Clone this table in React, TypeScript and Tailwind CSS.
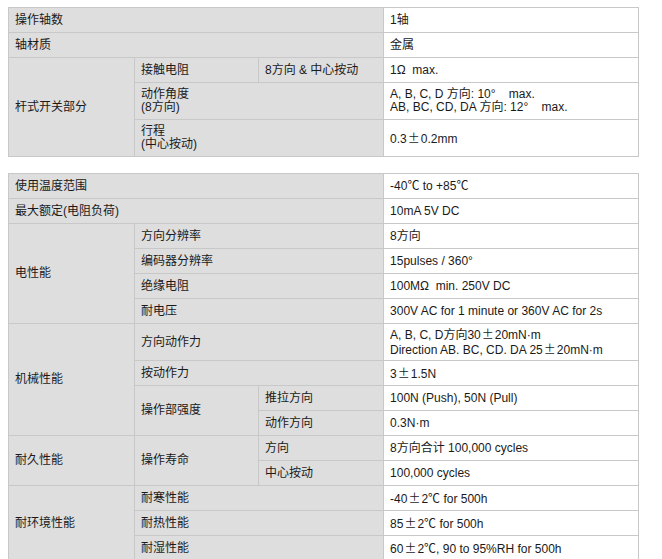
import React from 'react'

const font = { fontFamily: '"Liberation Sans", "Noto Sans CJK SC", sans-serif' }

// label cell (gray) and value cell (white)
const L = 'bg-[#dedede] border border-[#c8c8c8] px-[6px] py-0 h-[25px] align-middle text-left font-normal'
const V = 'bg-white border border-[#c8c8c8] px-[6px] py-0 h-[25px] align-middle text-left'
const TALL = ' !h-[37px] leading-[13px]'

function Pm() {
  return <span className="px-[1px]" style={{ fontFamily: '"Noto Sans CJK SC", sans-serif' }}>±</span>
}

function Cols() {
  return (
    <colgroup>
      <col className="w-[126px]" />
      <col className="w-[124px]" />
      <col className="w-[125px]" />
      <col className="w-[255px]" />
    </colgroup>
  )
}

export default function App() {
  return (
    <div className="min-h-screen bg-white pt-[7px] pl-[8px] text-[12px] leading-[13px] text-[#1a1a1a]" style={font}>
      {/* lever switch section */}
      <table className="table-fixed w-[630px] border-collapse">
        <Cols />
        <tbody>
          <tr>
            <td className={L} colSpan={3}>操作轴数</td>
            <td className={V}>1轴</td>
          </tr>
          <tr>
            <td className={L} colSpan={3}>轴材质</td>
            <td className={V}>金属</td>
          </tr>
          <tr>
            <td className={L} rowSpan={3}>杆式开关部分</td>
            <td className={L}>接触电阻</td>
            <td className={L}>8方向 &amp; 中心按动</td>
            <td className={V}>1Ω&nbsp; max.</td>
          </tr>
          <tr>
            <td className={L + TALL} colSpan={2}>动作角度<br />(8方向)</td>
            <td className={V + TALL}>
              A, B, C, D 方向: 10°&nbsp;&nbsp;&nbsp; max.<br />AB, BC, CD, DA 方向: 12°&nbsp;&nbsp;&nbsp; max.
            </td>
          </tr>
          <tr>
            <td className={L + TALL} colSpan={2}>行程<br />(中心按动)</td>
            <td className={V + TALL}>0.3<Pm />0.2mm</td>
          </tr>
        </tbody>
      </table>

      {/* general specs */}
      <table className="table-fixed w-[630px] border-collapse mt-[16px]">
        <Cols />
        <tbody>
          <tr>
            <td className={L} colSpan={3}>使用温度范围</td>
            <td className={V}>-40℃ to +85℃</td>
          </tr>
          <tr>
            <td className={L} colSpan={3}>最大额定(电阻负荷)</td>
            <td className={V}>10mA 5V DC</td>
          </tr>
          <tr>
            <td className={L} rowSpan={4}>电性能</td>
            <td className={L} colSpan={2}>方向分辨率</td>
            <td className={V}>8方向</td>
          </tr>
          <tr>
            <td className={L} colSpan={2}>编码器分辨率</td>
            <td className={V}>15pulses / 360°</td>
          </tr>
          <tr>
            <td className={L} colSpan={2}>绝缘电阻</td>
            <td className={V}>100MΩ&nbsp; min. 250V DC</td>
          </tr>
          <tr>
            <td className={L} colSpan={2}>耐电压</td>
            <td className={V}>300V AC for 1 minute or 360V AC for 2s</td>
          </tr>
          <tr>
            <td className={L} rowSpan={4}>机械性能</td>
            <td className={L + TALL} colSpan={2}>方向动作力</td>
            <td className={V + TALL}>
              A, B, C, D方向30<Pm />20mN·m<br />Direction AB. BC, CD. DA 25<Pm />20mN·m
            </td>
          </tr>
          <tr>
            <td className={L} colSpan={2}>按动作力</td>
            <td className={V}>3<Pm />1.5N</td>
          </tr>
          <tr>
            <td className={L} rowSpan={2}>操作部强度</td>
            <td className={L}>推拉方向</td>
            <td className={V}>100N (Push), 50N (Pull)</td>
          </tr>
          <tr>
            <td className={L}>动作方向</td>
            <td className={V}>0.3N·m</td>
          </tr>
          <tr>
            <td className={L} rowSpan={2}>耐久性能</td>
            <td className={L} rowSpan={2}>操作寿命</td>
            <td className={L}>方向</td>
            <td className={V}>8方向合计 100,000 cycles</td>
          </tr>
          <tr>
            <td className={L}>中心按动</td>
            <td className={V}>100,000 cycles</td>
          </tr>
          <tr>
            <td className={L} rowSpan={3}>耐环境性能</td>
            <td className={L} colSpan={2}>耐寒性能</td>
            <td className={V}>-40<Pm />2℃ for 500h</td>
          </tr>
          <tr>
            <td className={L} colSpan={2}>耐热性能</td>
            <td className={V}>85<Pm />2℃ for 500h</td>
          </tr>
          <tr>
            <td className={L} colSpan={2}>耐湿性能</td>
            <td className={V}>60<Pm />2℃, 90 to 95%RH for 500h</td>
          </tr>
        </tbody>
      </table>
    </div>
  )
}
